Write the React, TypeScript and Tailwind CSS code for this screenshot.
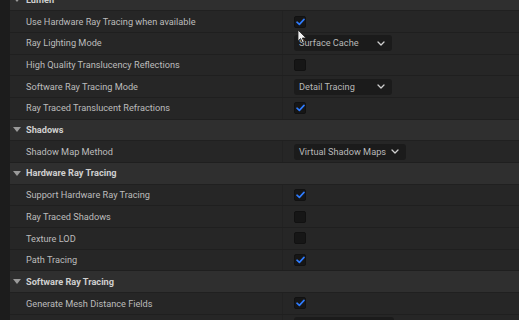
import React from 'react';

type Row =
  | { kind: 'header'; label: string }
  | { kind: 'check'; label: string; checked: boolean }
  | { kind: 'select'; label: string; value: string; width: string }
  | { kind: 'number'; label: string };

const rows: Row[] = [
  { kind: 'header', label: 'Lumen' },
  { kind: 'check', label: 'Use Hardware Ray Tracing when available', checked: true },
  { kind: 'select', label: 'Ray Lighting Mode', value: 'Surface Cache', width: 'w-[98px]' },
  { kind: 'check', label: 'High Quality Translucency Reflections', checked: false },
  { kind: 'select', label: 'Software Ray Tracing Mode', value: 'Detail Tracing', width: 'w-[98px]' },
  { kind: 'check', label: 'Ray Traced Translucent Refractions', checked: true },
  { kind: 'header', label: 'Shadows' },
  { kind: 'select', label: 'Shadow Map Method', value: 'Virtual Shadow Maps', width: 'w-[112px]' },
  { kind: 'header', label: 'Hardware Ray Tracing' },
  { kind: 'check', label: 'Support Hardware Ray Tracing', checked: true },
  { kind: 'check', label: 'Ray Traced Shadows', checked: false },
  { kind: 'check', label: 'Texture LOD', checked: false },
  { kind: 'check', label: 'Path Tracing', checked: true },
  { kind: 'header', label: 'Software Ray Tracing' },
  { kind: 'check', label: 'Generate Mesh Distance Fields', checked: true },
  { kind: 'number', label: 'Distance Field Voxel Density' },
];

function Checkbox({ checked }: { checked: boolean }) {
  return (
    <div className="w-[12px] h-[12px] rounded-[2px] bg-[#161616] border border-[#111] flex items-center justify-center">
      {checked && (
        <svg width="9" height="8" viewBox="0 0 9 8">
          <path d="M1 4.2 L3.4 6.4 L8 1.4" fill="none" stroke="#2f7cff" strokeWidth="1.6" strokeLinecap="round" strokeLinejoin="round" />
        </svg>
      )}
    </div>
  );
}

function Select({ value, width }: { value: string; width: string }) {
  return (
    <div className={`${width} h-[16px] rounded-[3px] bg-[#1b1b1b] flex items-center justify-between pl-[5px] pr-[7px] text-[#b8b8b8]`}>
      <span>{value}</span>
      <svg width="8" height="5" viewBox="0 0 8 5">
        <path d="M1 1 L4 4 L7 1" fill="none" stroke="#cfcfcf" strokeWidth="1.3" strokeLinecap="round" strokeLinejoin="round" />
      </svg>
    </div>
  );
}

export default function App() {
  return (
    <div className="relative w-[519px] h-[320px] overflow-hidden bg-[#1c1c1c] text-[9.2px] font-['Roboto',_sans-serif]">
      <div className="ml-[10px] -mt-[10.5px] flex flex-col">
        {rows.map((row, i) =>
          row.kind === 'header' ? (
            <div key={i} className="h-[21.7px] shrink-0 flex items-center bg-[#2f2f2f] border-b border-[#202020]">
              <svg width="8" height="5" viewBox="0 0 8 5" className="ml-[3px] mr-[5px]">
                <path d="M0 0 L8 0 L4 5 Z" fill="#9a9a9a" />
              </svg>
              <span className="font-bold text-[#cfcfcf]">{row.label}</span>
            </div>
          ) : (
            <div key={i} className="h-[21.7px] shrink-0 flex items-stretch bg-[#262626] border-b border-[#1f1f1f]">
              <div className="w-[273px] flex items-center pl-[16px] text-[#bcbcbc] border-r border-[#222]">{row.label}</div>
              <div className="flex-1 flex items-center pl-[11px]">
                {row.kind === 'check' && <Checkbox checked={row.checked} />}
                {row.kind === 'select' && <Select value={row.value} width={row.width} />}
                {row.kind === 'number' && <div className="w-[100px] h-[16px] rounded-[3px] bg-[#1b1b1b]" />}
              </div>
            </div>
          )
        )}
      </div>
      {/* mouse cursor */}
      <svg className="absolute left-[297px] top-[29px]" width="10" height="15" viewBox="0 0 10 15">
        <path d="M1 1 L1 12 L3.6 9.6 L5.6 14 L7.2 13.2 L5.3 9 L9 9 Z" fill="#f2f2f2" stroke="#222" strokeWidth="0.8" />
      </svg>
    </div>
  );
}
